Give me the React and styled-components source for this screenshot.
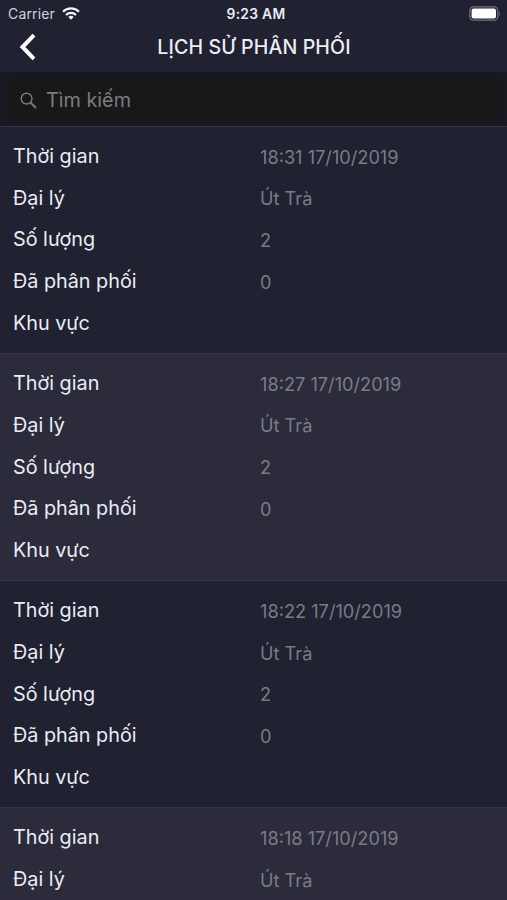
import React from 'react';
import styled, { createGlobalStyle } from 'styled-components';

const Global = createGlobalStyle`
  * { box-sizing: border-box; }
  body { margin: 0; background: #202131; font-family: Inter, Roboto, sans-serif; }
`;

const Screen = styled.main`
  width: 507px;
  height: 900px;
  overflow: hidden;
  display: flex;
  flex-direction: column;
  background: #202131;
  color: #ececf5;
`;

const StatusBar = styled.div`
  height: 27px;
  flex: none;
  display: grid;
  grid-template-columns: 1fr auto 1fr;
  align-items: center;
  padding: 0 6px 1px 8px;
`;

const Carrier = styled.div`
  display: flex;
  align-items: center;
  gap: 7px;
  color: #d2d2da;
  font-size: 14px;
  letter-spacing: 0.15px;
`;

const Clock = styled.div`
  font-weight: 600;
  font-size: 13.8px;
  letter-spacing: 0.3px;
  padding: 1px 0 0 3px;
`;

const Icon = styled.svg`
  display: block;
  flex: none;
`;

const BatteryIcon = styled(Icon)`
  justify-self: end;
`;

const NavBar = styled.header`
  height: 45px;
  flex: none;
  display: grid;
  grid-template-columns: 57px 1fr 56px;
  align-items: center;
  padding-bottom: 6px;
`;

const Back = styled.button`
  padding: 0 0 0 19px;
  border: 0;
  background: none;
  display: flex;
`;

const Title = styled.h1`
  margin: 0;
  font-size: 19.6px;
  font-weight: 500;
  letter-spacing: 0.1px;
  text-align: center;
  white-space: nowrap;
  line-height: 28px;
`;

const SearchBar = styled.div`
  height: 54px;
  flex: none;
  background: #191922;
  padding: 7px 9px 7px 12px;
`;

const SearchField = styled.div`
  height: 40px;
  border-radius: 6px;
  background: #181819;
  box-shadow: 0 0 4px 1px #181819;
  display: flex;
  align-items: center;
  gap: 9px;
  padding: 2px 8px 0;
  color: #7d7d7f;
  font-size: 19.8px;
`;

const Card = styled.section`
  padding: 9px 0 9.1px;
  flex: none;
  background: ${p => (p.$alt ? '#2b2b3c' : '#202131')};
  border-top: 1px solid #343544;
`;

const Row = styled.div`
  height: 41.6px;
  display: grid;
  grid-template-columns: 247px 1fr;
  align-items: center;
  margin: 0 22px 0 13px;
  border-bottom: 1px solid ${p => (p.$alt ? '#29293a' : '#22232f')};

  &:last-child {
    border-bottom-color: transparent;
  }
`;

const Label = styled.span`
  font-size: 19.8px;
  white-space: nowrap;
`;

const Value = styled.span`
  padding-top: 1px;
  font-size: 18.2px;
  color: #7b7b86;
  white-space: nowrap;
`;

const record = (time, fields = 5) =>
  [
    ['Thời gian', `${time} 17/10/2019`],
    ['Đại lý', 'Út Trà'],
    ['Số lượng', '2'],
    ['Đã phân phối', '0'],
    ['Khu vực', ''],
  ].slice(0, fields);

const records = [record('18:31'), record('18:27'), record('18:22'), record('18:18', 2)];

export default function App() {
  return (
    <Screen>
      <Global />
      <StatusBar>
        <Carrier>
          Carrier
          <Icon width="18" height="13" viewBox="0 0 18 13" fill="none" stroke="#f4f4f8">
            <path d="M1 4.7a11.5 11.5 0 0 1 16 0" strokeWidth="2.2" />
            <path d="M4 7.9a7.2 7.2 0 0 1 10 0" strokeWidth="2.1" />
            <path d="M6.3 10.1a3.9 3.9 0 0 1 5.4 0L9 12.8z" fill="#f4f4f8" stroke="none" />
          </Icon>
        </Carrier>
        <Clock>9:23 AM</Clock>
        <BatteryIcon width="32" height="15" viewBox="0 0 32 15">
          <rect x="0.8" y="0.8" width="28" height="13.4" rx="3.8" fill="none" stroke="#75737f" strokeWidth="1.2" />
          <rect x="2.6" y="2.6" width="24.4" height="9.8" rx="2" fill="#fff" />
          <path d="M30.2 5.2q1.8 2.3 0 4.6z" fill="#75737f" />
        </BatteryIcon>
      </StatusBar>
      <NavBar>
        <Back aria-label="Quay lại">
          <Icon width="18" height="28" viewBox="0 0 18 28" fill="none" stroke="#fff" strokeWidth="4">
            <path d="M15 2.2 3.5 14 15 25.8" />
          </Icon>
        </Back>
        <Title>LỊCH SỬ PHÂN PHỐI</Title>
      </NavBar>
      <SearchBar>
        <SearchField>
          <Icon width="17" height="17" viewBox="0 0 17 17" fill="none" stroke="#7d7d7f">
            <circle cx="6.6" cy="6.6" r="5.4" strokeWidth="1.4" />
            <path d="m10.6 10.6 5.4 5.4" strokeWidth="2" />
          </Icon>
          <span>Tìm kiếm</span>
        </SearchField>
      </SearchBar>
      {records.map((fields, i) => (
        <Card key={fields[0][1]} $alt={i % 2 === 1}>
          {fields.map(([label, value]) => (
            <Row key={label} $alt={i % 2 === 1}>
              <Label>{label}</Label>
              <Value>{value}</Value>
            </Row>
          ))}
        </Card>
      ))}
    </Screen>
  );
}
